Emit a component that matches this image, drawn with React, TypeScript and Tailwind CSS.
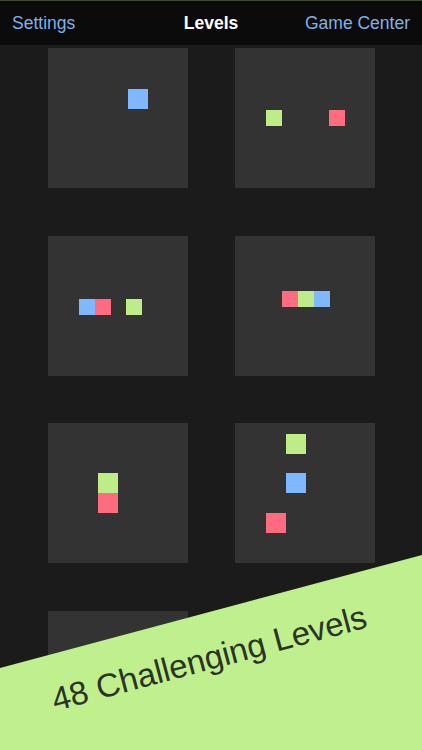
import React from 'react';

type Tile = { x: number; y: number; s: number; c: string };

const BLUE = 'bg-[#80b8ff]';
const GREEN = 'bg-[#bdec88]';
const RED = 'bg-[#ff6c80]';

// tile positions relative to each 140x140 level card
const levels: Tile[][] = [
  [{ x: 80, y: 41, s: 20, c: BLUE }],
  [
    { x: 31, y: 62, s: 16, c: GREEN },
    { x: 94, y: 62, s: 16, c: RED },
  ],
  [
    { x: 31, y: 63, s: 16, c: BLUE },
    { x: 47, y: 63, s: 16, c: RED },
    { x: 78, y: 63, s: 16, c: GREEN },
  ],
  [
    { x: 47, y: 55, s: 16, c: RED },
    { x: 63, y: 55, s: 16, c: GREEN },
    { x: 79, y: 55, s: 16, c: BLUE },
  ],
  [
    { x: 50, y: 50, s: 20, c: GREEN },
    { x: 50, y: 70, s: 20, c: RED },
  ],
  [
    { x: 51, y: 11, s: 20, c: GREEN },
    { x: 51, y: 50, s: 20, c: BLUE },
    { x: 31, y: 90, s: 20, c: RED },
  ],
  [],
  [],
];

const LevelCard = ({ tiles }: { tiles: Tile[] }) => (
  <div className="relative w-[140px] h-[140px] bg-[#333333]">
    {tiles.map((t, i) => (
      <div
        key={i}
        className={`absolute ${t.c}`}
        style={{ left: t.x, top: t.y, width: t.s, height: t.s }}
      />
    ))}
  </div>
);

export default function App() {
  return (
    <div
      className="relative w-[422px] h-[750px] overflow-hidden bg-[#1b1b1b]"
      style={{ fontFamily: '"Liberation Sans", Arial, sans-serif' }}
    >
      {/* nav bar */}
      <div className="h-[45px] bg-[#0b0b0b] border-t border-[#3f4a33] grid grid-cols-3 items-center px-3 text-[17.5px]">
        <span className="text-[#7fb1ea]">Settings</span>
        <span className="text-white font-bold text-center">Levels</span>
        <span className="text-[#7fb1ea] text-right">Game Center</span>
      </div>

      {/* levels grid */}
      <div className="grid grid-cols-[140px_140px] justify-center gap-x-[47px] gap-y-[47.5px] pt-[3px]">
        {levels.map((tiles, i) => (
          <LevelCard key={i} tiles={tiles} />
        ))}
      </div>

      {/* promo banner */}
      <div className="absolute inset-0 bg-[#c0f08e] [clip-path:polygon(0_668px,100%_555px,100%_100%,0_100%)]">
        <span className="absolute left-[209px] top-[658px] -translate-x-1/2 -translate-y-1/2 -rotate-15 whitespace-nowrap text-[33px] leading-none text-[#2b3326]">
          48 Challenging Levels
        </span>
      </div>
    </div>
  );
}
